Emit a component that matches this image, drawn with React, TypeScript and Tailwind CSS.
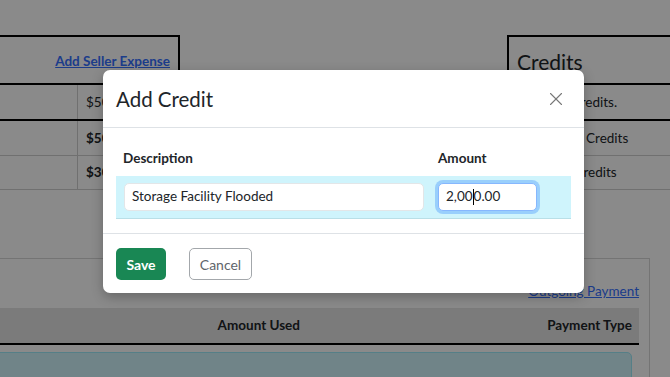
import { X } from 'lucide-react'

const Page = () => (
  <div className="pt-[35px] text-[13.5px] text-[#212529]">
    <div className="flex">
      <div className="ml-[-20px] w-[200px]">
        <div className="h-[50px] border-2 border-black flex items-center justify-end pr-[8px] pt-[2px]">
          <a className="font-bold underline text-[#3570ff] text-[13.5px]">Add Seller Expense</a>
        </div>
        <div className="flex h-[36px] border-b-2 border-black">
          <div className="w-[98px] border-r border-[#cfcfcf]" />
          <div className="flex-1 flex items-center pl-[8px]">$500.00</div>
        </div>
        <div className="flex h-[35px] border-b border-[#cfcfcf] font-bold">
          <div className="w-[98px] border-r border-[#cfcfcf]" />
          <div className="flex-1 flex items-center pl-[8px]">$500.00</div>
        </div>
        <div className="flex h-[34px] border-b border-[#cfcfcf] font-bold">
          <div className="w-[98px] border-r border-[#cfcfcf]" />
          <div className="flex-1 flex items-center pl-[8px]">$300.00</div>
        </div>
      </div>
      <div className="ml-auto mr-[-40px] w-[203px]">
        <div className="h-[50px] border-2 border-black flex items-center pl-[8px] pt-[4px]">
          <span className="text-[21px]">Credits</span>
        </div>
        <div className="h-[36px] border-b-2 border-black flex items-center pl-[46px]">No credits.</div>
        <div className="h-[35px] border-b border-[#cfcfcf] flex items-center pl-[47px]">Total Credits</div>
        <div className="h-[34px] border-b border-[#cfcfcf] flex items-center pl-[42px]">Net Credits</div>
      </div>
    </div>
    <div className="mt-[68px] ml-[-20px] w-[670px] h-[200px] border border-[#d6d6d6] pr-[10px]">
      <div className="flex justify-end h-[49px] items-end pb-[7px]">
        <a className="underline text-[#3570ff] text-[13.5px]">Outgoing Payment</a>
      </div>
      <div className="flex h-[37px] bg-[#e4e4e4] border-b-2 border-black font-bold items-center">
        <div className="w-[327px] text-right pr-[8px]">Amount Used</div>
        <div className="flex-1 text-right pr-[7px]">Payment Type</div>
      </div>
      <div className="pt-[7px] pr-[7px]">
        <div className="h-[60px] bg-[#cff4fc] border border-[#9eeaf9] rounded-[5px]" />
      </div>
    </div>
  </div>
)

const Modal = () => (
  <div className="absolute left-[103px] top-[70px] w-[481px] bg-white rounded-[7px] shadow-[0_4px_12px_rgba(0,0,0,0.25)] text-[#212529]">
    <div className="h-[58px] flex items-center justify-between pl-[13px] pr-[17px] border-b border-[#dee2e6]">
      <h5 className="text-[20.5px] leading-[30px]">Add Credit</h5>
      <X className="w-[22px] h-[22px] text-[#777]" strokeWidth={1.2} />
    </div>
    <div className="px-[13px] pt-[13px] pb-[14px] text-[13.5px]">
      <div className="flex h-[35px] items-center font-bold">
        <div className="w-[314px] pl-[7px]">Description</div>
        <div className="pl-[8px]">Amount</div>
      </div>
      <div className="flex h-[43px] items-center bg-[#cff4fc] border-b border-[#b9dfe7] pb-[1px]">
        <div className="w-[314px] pl-[8px]">
          <div className="w-[300px] h-[28px] bg-white border border-[#e3e6e8] rounded-[5px] flex items-center pl-[7px]">
            Storage Facility Flooded
          </div>
        </div>
        <div className="pl-[8px]">
          <div className="w-[99px] h-[28px] bg-white border border-[#86b7fe] rounded-[5px] flex items-center pl-[7px] shadow-[0_0_0_3px_rgba(13,110,253,0.28)]">
            2,00<span className="inline-block w-px h-[16px] bg-black" />0.00
          </div>
        </div>
      </div>
    </div>
    <div className="border-t border-[#dee2e6] px-[13px] pt-[14px] pb-[13px] flex gap-[23px] text-[14px]">
      <button className="w-[50px] h-[32px] rounded-[5px] bg-[#198754] text-white font-bold">Save</button>
      <button className="w-[63px] h-[32px] rounded-[5px] border border-[#a3a7ab] text-[#5f656b] bg-white">Cancel</button>
    </div>
  </div>
)

export default function App() {
  return (
    <div className="relative w-[670px] h-[377px] overflow-hidden bg-white font-['Lato',sans-serif]">
      <Page />
      <div className="absolute inset-0 bg-black/[0.46]" />
      <Modal />
    </div>
  )
}
